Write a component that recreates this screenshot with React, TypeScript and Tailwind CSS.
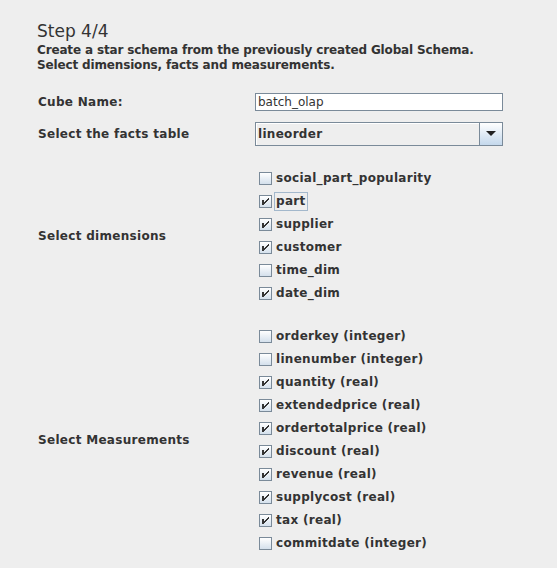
import React from "react";

const dimensions = [
  { name: "social_part_popularity", checked: false },
  { name: "part", checked: true, focused: true },
  { name: "supplier", checked: true },
  { name: "customer", checked: true },
  { name: "time_dim", checked: false },
  { name: "date_dim", checked: true },
];

const measurements = [
  { name: "orderkey (integer)", checked: false },
  { name: "linenumber (integer)", checked: false },
  { name: "quantity (real)", checked: true },
  { name: "extendedprice (real)", checked: true },
  { name: "ordertotalprice (real)", checked: true },
  { name: "discount (real)", checked: true },
  { name: "revenue (real)", checked: true },
  { name: "supplycost (real)", checked: true },
  { name: "tax (real)", checked: true },
  { name: "commitdate (integer)", checked: false },
];

type Item = { name: string; checked: boolean; focused?: boolean };

function CheckBox({ item }: { item: Item }) {
  return (
    <div className="flex h-[23px] items-center pl-[4px]">
      <div className="relative h-[13px] w-[13px] shrink-0 border border-[#7a8a99] bg-gradient-to-b from-[#ffffff] to-[#d4e0ec]">
        {item.checked && (
          <svg className="absolute -left-px -top-px" width="13" height="13" viewBox="0 0 13 13" shapeRendering="crispEdges">
            {/* metal style check mark */}
            <g fill="#333333">
              <rect x="3" y="5" width="2" height="5" />
              <rect x="5" y="7" width="1" height="2" />
              <rect x="6" y="6" width="1" height="2" />
              <rect x="7" y="5" width="1" height="2" />
              <rect x="8" y="4" width="1" height="2" />
              <rect x="9" y="3" width="1" height="2" />
            </g>
          </svg>
        )}
      </div>
      <span
        className={`ml-[3px] px-[1px] leading-[17px] ${item.focused ? "outline outline-1 outline-[#a3b8cc]" : ""}`}
      >
        {item.name}
      </span>
    </div>
  );
}

export default function App() {
  return (
    <div
      className="h-[568px] w-[557px] overflow-hidden bg-[#eeeeee] pl-[37px] pt-[21px] text-[12px] font-bold tracking-[0.3px] text-[#333333]"
      style={{ fontFamily: '"DejaVu Sans", sans-serif' }}
    >
      {/* Header */}
      <div className="text-[17px] font-normal leading-[21px] tracking-normal">Step 4/4</div>
      <div className="mt-[1px] text-[12px] leading-[15px] tracking-[-0.15px]">
        Create a star schema from the previously created Global Schema.
        <br />
        Select dimensions, facts and measurements.
      </div>

      <div className="mt-[20px] grid grid-cols-[218px_248px] items-center">
        <div className="pl-[1px]">Cube Name:</div>
        <div className="flex h-[18px] items-center border border-[#7a8a99] bg-white pl-[2px] font-normal tracking-normal">
          batch_olap
        </div>

        <div className="mt-[11px] pl-[1px]">Select the facts table</div>
        <div className="mt-[11px] flex h-[24px] border border-[#7a8a99] bg-[#eeeeee]">
          <div className="flex flex-1 items-center border-r border-[#7a8a99] pl-[2px] shadow-[inset_1px_1px_0_#ffffff]">
            lineorder
          </div>
          <div className="flex w-[22px] items-center justify-center bg-gradient-to-b from-[#ffffff] to-[#c4d8ec]">
            <svg width="10" height="6" viewBox="0 0 10 6">
              <path d="M0 0 H10 L5 5 Z" fill="#222222" />
            </svg>
          </div>
        </div>

        <div className="mt-[21px] pl-[1px]">Select dimensions</div>
        <div className="mt-[21px]">
          {dimensions.map((d) => (
            <CheckBox key={d.name} item={d} />
          ))}
        </div>

        <div className="mt-[20px] pl-[1px]">Select Measurements</div>
        <div className="mt-[20px]">
          {measurements.map((m) => (
            <CheckBox key={m.name} item={m} />
          ))}
        </div>
      </div>
    </div>
  );
}
